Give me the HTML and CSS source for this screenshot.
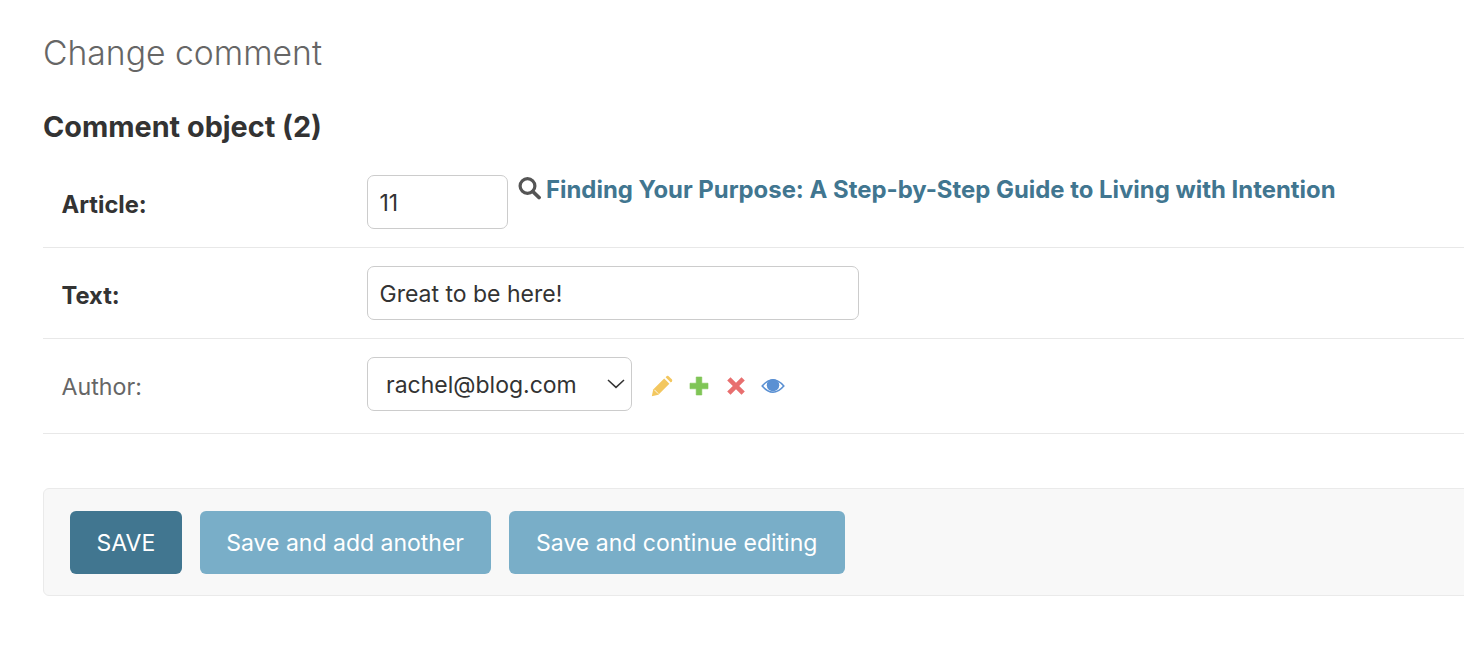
FILE: index.html
```html
<!DOCTYPE html>
<html lang="en">
<head>
    <meta charset="UTF-8">
    <meta name="viewport" content="width=device-width, initial-scale=1.0">
    <title>Change comment</title>
    <link rel="stylesheet" href="styles.css">
</head>
<body>
    <div class="content">
        <h1>Change comment</h1>
        <h2>Comment object (2)</h2>
        <form>
            <div class="form-row">
                <label class="required">Article:</label>
                <input class="field id-field" type="text" value="11">
                <svg class="lookup" viewBox="0 0 24 24" width="24" height="24">
                    <circle cx="10.5" cy="10" r="7.4" fill="none" stroke="#555" stroke-width="3.2"/>
                    <path d="M15.8 15.5 L22 21.5" stroke="#555" stroke-width="3.8" stroke-linecap="round"/>
                </svg>
                <a class="related" href="#">Finding Your Purpose: A Step-by-Step Guide to Living with Intention</a>
            </div>
            <div class="form-row">
                <label class="required">Text:</label>
                <input class="field text-field" type="text" value="Great to be here!">
            </div>
            <div class="form-row last">
                <label>Author:</label>
                <div class="select-box">
                    <span>rachel@blog.com</span>
                    <svg class="chevron" viewBox="0 0 18 10" width="18" height="10">
                        <path d="M1 1 L9 8.4 L17 1" fill="none" stroke="#333" stroke-width="1.5"/>
                    </svg>
                </div>
                <div class="actions">
                    <svg viewBox="0 0 22 22" width="22" height="22">
                        <path d="M0.8 21.2 L2.2 14.6 L13.2 3.6 L18.4 8.8 L7.4 19.8 Z" fill="#f3c75f"/>
                        <path d="M14.6 2.2 L15.8 1 Q16.6 0.4 17.4 1 L21 4.6 Q21.6 5.4 21 6.2 L19.8 7.4 Z" fill="#f3c75f"/>
                        <path d="M3.4 14.8 L7.2 18.6" stroke="#fff" stroke-width="0.9"/>
                    </svg>
                    <svg viewBox="0 0 22 22" width="22" height="22">
                        <path d="M8.2 2 H13.8 V8.2 H20 V13.8 H13.8 V20 H8.2 V13.8 H2 V8.2 H8.2 Z" fill="#7fc556" stroke="#7fc556" stroke-width="0.6" stroke-linejoin="round"/>
                    </svg>
                    <svg viewBox="0 0 22 22" width="22" height="22">
                        <path d="M5.5 2.2 L11 7.8 L16.5 2.2 L19.8 5.5 L14.2 11 L19.8 16.5 L16.5 19.8 L11 14.2 L5.5 19.8 L2.2 16.5 L7.8 11 L2.2 5.5 Z" fill="#e86f6f"/>
                    </svg>
                    <svg class="eye" viewBox="0 0 24 22" width="24" height="22">
                        <path d="M1.2 11 Q12 -1.5 22.8 11 Q12 23.5 1.2 11 Z" fill="none" stroke="#5a90d3" stroke-width="1.6"/>
                        <circle cx="12" cy="10.2" r="6.2" fill="#5a90d3"/>
                    </svg>
                </div>
            </div>
            <div class="submit-row">
                <button class="btn default" type="button">SAVE</button>
                <button class="btn" type="button">Save and add another</button>
                <button class="btn wide" type="button">Save and continue editing</button>
            </div>
        </form>
    </div>
</body>
</html>
```

FILE: styles.css
```css
html, body {
    margin: 0;
    overflow: hidden;
    background: #fff;
}

body {
    height: 672px;
    font-family: Inter, "Liberation Sans", sans-serif;
    color: #333;
}

.content {
    padding: 0 0 0 43px;
}

h1 {
    margin: 0;
    padding-top: 33px;
    font-size: 33.7px;
    line-height: 40px;
    font-weight: 300;
    color: #666;
}

h2 {
    margin: 0;
    padding: 34px 0 10px;
    font-size: 28.8px;
    line-height: 40px;
    font-weight: 700;
    color: #333;
}

/* Form rows */
.form-row {
    display: flex;
    align-items: flex-start;
    padding: 18px 0 18px 18.5px;
    border-bottom: 1px solid #e8e8e8;
}

.form-row.last {
    padding-bottom: 22px;
}

.form-row label {
    width: 305.5px;
    flex: none;
    padding-top: 16px;
    font-size: 23.2px;
    line-height: 28px;
    color: #666;
}

.form-row label.required {
    font-size: 23.7px;
    font-weight: 700;
    color: #333;
}

.field {
    box-sizing: border-box;
    height: 54px;
    padding: 2px 11.5px 0;
    border: 1px solid #ccc;
    border-radius: 7px;
    background: #fff;
    font: 23px Inter, "Liberation Sans", sans-serif;
    color: #333;
}

.id-field { width: 141px; }
.text-field { width: 492px; }

.lookup {
    flex: none;
    margin: 1px 5px 0 9px;
}

.related {
    padding-top: 1px;
    font-size: 23.9px;
    line-height: 28px;
    font-weight: 700;
    color: #417690;
    text-decoration: none;
}

/* Author select */
.select-box {
    box-sizing: border-box;
    width: 265px;
    height: 54px;
    display: flex;
    align-items: center;
    justify-content: space-between;
    padding: 2px 0 0 18px;
    border: 1px solid #ccc;
    border-radius: 7px;
    font-size: 23px;
}

.chevron {
    margin: -2px 6px 0 0;
}

.actions {
    display: flex;
    align-items: center;
    gap: 15px;
    height: 50px;
    margin: 4px 0 0 19px;
}

.actions .eye {
    margin-left: -1px;
}

/* Submit row */
.submit-row {
    display: flex;
    gap: 18px;
    margin: 54px -20px 0 0;
    padding: 22px 26px 21px;
    background: #f8f8f8;
    border: 1px solid #eaeaea;
    border-radius: 6px;
}

.btn {
    height: 63px;
    padding: 0 26.5px;
    border: 0;
    border-radius: 6px;
    background: #79aec8;
    color: #fff;
    font: 23px Inter, "Liberation Sans", sans-serif;
}

.btn.default {
    background: #417690;
}

.btn.wide {
    padding: 0 27.5px;
}
```
